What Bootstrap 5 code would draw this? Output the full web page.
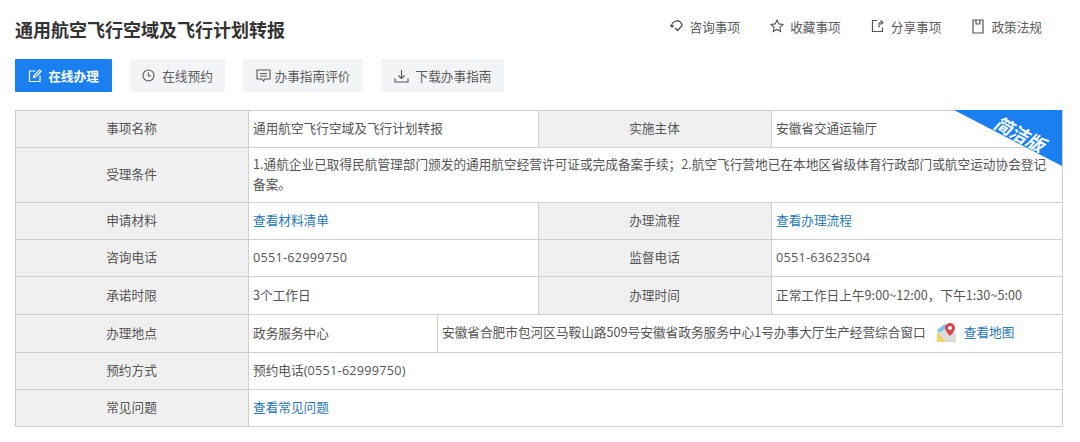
<!DOCTYPE html>
<html lang="zh-CN"><head><meta charset="utf-8">
<title>事项</title>
<link href="https://cdn.jsdelivr.net/npm/bootstrap@5.3.0/dist/css/bootstrap.min.css" rel="stylesheet">
<style>
html,body{height:442px;overflow:hidden}
body{background:#fff;color:#555;font-family:"Noto Sans CJK SC","Open Sans",sans-serif;font-size:12.67px;width:1080px}
.wrap{padding:0 18px 0 15px;position:relative}
.head-row{height:59px}
.ttl{font-size:18px;font-weight:700;color:#333;margin:0;line-height:59px;}
.tools{gap:30px;padding-right:20px;margin-top:-7px}
.tool{color:#5c5c5c;display:flex;align-items:center;gap:6px;text-decoration:none;font-size:12.67px}
.acts{gap:18px;height:33px;margin-bottom:18px}
.act{background:#f3f4f5;color:#5c5c5c;height:33px;border:0;border-radius:1px;font-size:12.67px;padding:0;display:flex;align-items:center;justify-content:center;gap:7px}
.act-main{background:#1a7ff0;color:#fff;font-weight:700;width:97px;gap:6px}
.w-a{width:95px}
.w-b{width:120px;gap:4px}
.w-c{width:123px}
.gt{table-layout:fixed;width:1047px;border-collapse:collapse;margin:0;color:#555}
.gt td{border:1px solid #cfcfcf;padding:0 5px 2px 4px;font-size:12.67px;line-height:20px;vertical-align:middle}
.gt td.lb{background:#f0f0f0;text-align:center}
.r37{height:37px}
.r38{height:38px}
.r55{height:55px}
.gt a{color:#2a78b8;text-decoration:none}
.num{font-family:"Open Sans","Noto Sans CJK SC",sans-serif;letter-spacing:.25px}
.corner{position:absolute;right:18px;top:110px;width:108px;height:56px;overflow:hidden}
.corner svg{display:block}
.corner-t{position:absolute;left:31px;top:14px;width:70px;text-align:center;color:#fff;font-weight:700;font-size:18px;font-style:italic;transform:rotate(28deg);line-height:18px;white-space:nowrap}
.pin{vertical-align:middle;margin:0 7px 0 10px}
svg{flex:none}
</style></head><body>
<div class="wrap">
<div class="d-flex justify-content-between align-items-center head-row">
<h1 class="ttl">通用航空飞行空域及飞行计划转报</h1>
<div class="d-flex tools">
<a class="tool" href="#"><svg width="14" height="14" viewBox="0 0 14 14" fill="none" stroke="#555" stroke-width="1.300"><path d="M1.800 7.500A5.200 5.200 0 0 1 12.200 6.500L7.500 11.500 5 9M.5 6l1.500 2 1.800-1.600"/></svg>咨询事项</a>
<a class="tool" href="#"><svg width="14" height="14" viewBox="0 0 14 14" fill="none" stroke="#555" stroke-width="1.1"><path d="M7 1l1.800 3.900 4.200.5-3.100 2.900.8 4.200L7 10.400 3.300 12.500l.8-4.200L1 5.400l4.200-.5z"/></svg>收藏事项</a>
<a class="tool" href="#"><svg width="14" height="14" viewBox="0 0 14 14" fill="none" stroke="#555" stroke-width="1.200"><path d="M6 1.500H1.500v11h10V8.500M8 8.500V5.500c0-1.200.8-2 2.500-2M9.500 1.500l2.500 2-2.500 2"/></svg>分享事项</a>
<a class="tool" href="#"><svg width="14" height="15" viewBox="0 0 14 15" fill="none" stroke="#555" stroke-width="1.2"><path d="M2 1h10v13H2zM5 1v4h4V1"/></svg>政策法规</a>
</div>
</div>
<div class="d-flex acts">
<button class="act act-main" type="button"><svg width="14" height="14" viewBox="0 0 14 14" fill="none" stroke="#fff" stroke-width="1.2"><path d="M7.500 2H1.500v10.500H12V6.500M5.500 8.500l.5-2L11.500 1l1.500 1.500L7.500 8z"/></svg>在线办理</button>
<button class="act w-a" type="button"><svg width="13" height="13" viewBox="0 0 13 13" fill="none" stroke="#555" stroke-width="1.100"><circle cx="6.500" cy="6.500" r="5.500"/><path d="M6.500 3.500v3.500h2.500"/></svg>在线预约</button>
<button class="act w-b" type="button"><svg width="15" height="13" viewBox="0 0 15 13" fill="none" stroke="#555" stroke-width="1.100"><path d="M1 1h13v9H9l-1.500 2L6 10H1zM4 4.500h7M4 7h7"/></svg>办事指南评价</button>
<button class="act w-c" type="button"><svg width="15" height="14" viewBox="0 0 15 14" fill="none" stroke="#555" stroke-width="1.100"><path d="M7.500 1v8.500M4.500 6.500l3 3 3-3M1 9.500v3.500h13V9.500"/></svg>下载办事指南</button>
</div>
<table class="gt">
<colgroup><col style="width:233px"><col style="width:189px"><col style="width:101px"><col style="width:233px"><col style="width:291px"></colgroup>
<tbody>
<tr class="r37"><td class="lb">事项名称</td><td colspan="2">通用航空飞行空域及飞行计划转报</td><td class="lb">实施主体</td><td>安徽省交通运输厅</td></tr>
<tr class="r55"><td class="lb">受理条件</td><td colspan="4">1.通航企业已取得民航管理部门颁发的通用航空经营许可证或完成备案手续；2.航空飞行营地已在本地区省级体育行政部门或航空运动协会登记备案。</td></tr>
<tr class="r37"><td class="lb">申请材料</td><td colspan="2"><a href="#">查看材料清单</a></td><td class="lb">办理流程</td><td><a href="#">查看办理流程</a></td></tr>
<tr class="r37"><td class="lb">咨询电话</td><td colspan="2" class="num">0551-62999750</td><td class="lb">监督电话</td><td class="num">0551-63623504</td></tr>
<tr class="r38"><td class="lb">承诺时限</td><td colspan="2">3个工作日</td><td class="lb">办理时间</td><td>正常工作日上午9:00~12:00，下午1:30~5:00</td></tr>
<tr class="r38"><td class="lb">办理地点</td><td>政务服务中心</td><td colspan="3">安徽省合肥市包河区马鞍山路509号安徽省政务服务中心1号办事大厅生产经营综合窗口<svg class="pin" width="21" height="20" viewBox="0 0 21 20"><path d="M1 7l8-6 11 10v8H6z" fill="#dcdcdc"/><path d="M1 8l9 11H1z" fill="#eed36a"/><path d="M9 1 1 7l3 3 7-6z" fill="#7cc4e8"/><path d="M14 0a5 5 0 0 0-5 5c0 3 5 8 5 8s5-5 5-8a5 5 0 0 0-5-5z" fill="#d9434e"/><circle cx="14" cy="5" r="2" fill="#fff"/></svg><a href="#">查看地图</a></td></tr>
<tr class="r37"><td class="lb">预约方式</td><td colspan="4">预约电话<span class="num">(0551-62999750)</span></td></tr>
<tr class="r37"><td class="lb">常见问题</td><td colspan="4"><a href="#">查看常见问题</a></td></tr>
</tbody></table>
<div class="corner"><svg width="108" height="56" viewBox="0 0 108 56"><path d="M0 0H108V56z" fill="#1a7ff0"/></svg><span class="corner-t">简洁版</span></div>
</div>
<script src="https://cdn.jsdelivr.net/npm/bootstrap@5.3.0/dist/js/bootstrap.bundle.min.js"></script>
</body></html>
